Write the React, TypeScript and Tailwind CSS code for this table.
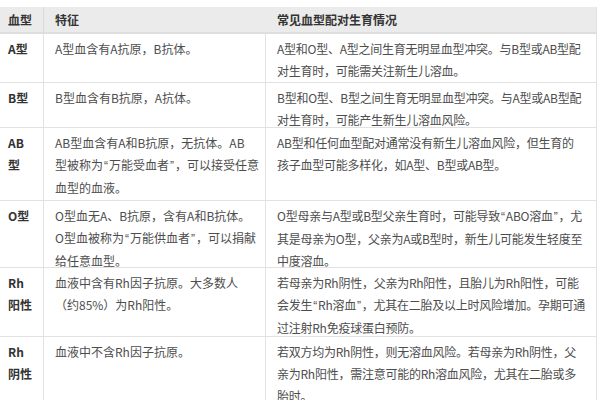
type Row = {
  type: string[];
  trait: string[];
  pairing: string[];
  height: string;
};

const rows: Row[] = [
  {
    type: ["A型"],
    trait: ["A型血含有A抗原，B抗体。"],
    pairing: [
      "A型和O型、A型之间生育无明显血型冲突。与B型或AB型配",
      "对生育时，可能需关注新生儿溶血。",
    ],
    height: "h-[49px]",
  },
  {
    type: ["B型"],
    trait: ["B型血含有B抗原，A抗体。"],
    pairing: [
      "B型和O型、B型之间生育无明显血型冲突。与A型或AB型配",
      "对生育时，可能产生新生儿溶血风险。",
    ],
    height: "h-[45px]",
  },
  {
    type: ["AB", "型"],
    trait: [
      "AB型血含有A和B抗原，无抗体。AB",
      "型被称为“万能受血者”，可以接受任意",
      "血型的血液。",
    ],
    pairing: [
      "AB型和任何血型配对通常没有新生儿溶血风险，但生育的",
      "孩子血型可能多样化，如A型、B型或AB型。",
    ],
    height: "h-[73px]",
  },
  {
    type: ["O型"],
    trait: [
      "O型血无A、B抗原，含有A和B抗体。",
      "O型血被称为“万能供血者”，可以捐献",
      "给任意血型。",
    ],
    pairing: [
      "O型母亲与A型或B型父亲生育时，可能导致“ABO溶血”，尤",
      "其是母亲为O型，父亲为A或B型时，新生儿可能发生轻度至",
      "中度溶血。",
    ],
    height: "h-[67px]",
  },
  {
    type: ["Rh", "阳性"],
    trait: ["血液中含有Rh因子抗原。大多数人", "（约85%）为Rh阳性。"],
    pairing: [
      "若母亲为Rh阴性，父亲为Rh阳性，且胎儿为Rh阳性，可能",
      "会发生“Rh溶血”，尤其在二胎及以上时风险增加。孕期可通",
      "过注射Rh免疫球蛋白预防。",
    ],
    height: "h-[69px]",
  },
  {
    type: ["Rh", "阴性"],
    trait: ["血液中不含Rh因子抗原。"],
    pairing: [
      "若双方均为Rh阴性，则无溶血风险。若母亲为Rh阴性，父",
      "亲为Rh阳性，需注意可能的Rh溶血风险，尤其在二胎或多",
      "胎时。",
    ],
    height: "h-[72px]",
  },
];

// curly quotes are full width in the CJK font; set them in a latin face so lines keep their width
function Line({ text }: { text: string }) {
  const parts = text.split(/([“”])/);
  return (
    <div className="whitespace-nowrap">
      {parts.map((p, i) =>
        p === "“" || p === "”" ? (
          <span key={i} className="font-['Liberation_Sans'] px-[1px]">
            {p}
          </span>
        ) : (
          <span key={i}>{p}</span>
        )
      )}
    </div>
  );
}

function Lines({ lines }: { lines: string[] }) {
  return (
    <>
      {lines.map((l, i) => (
        <Line key={i} text={l} />
      ))}
    </>
  );
}

export default function App() {
  return (
    <div
      className="w-[600px] h-[400px] overflow-hidden bg-white pt-[7px] text-[12px] leading-[22px]"
      style={{ fontFamily: '"Noto Sans CJK SC", "Noto Sans", sans-serif' }}
    >
      <div className="grid grid-cols-[44px_222px_331px] w-[597px]">
        {/* header */}
        <div className="h-[27px] bg-[#ebebeb] border-r border-[#d9d9d9] border-b-2 border-b-[#dedede] pl-[8px] flex items-center font-bold text-[#333]">
          血型
        </div>
        <div className="h-[27px] bg-[#ebebeb] border-b-2 border-b-[#dedede] pl-[11px] flex items-center font-bold text-[#333]">
          特征
        </div>
        <div className="h-[27px] bg-[#ebebeb] border-r border-[#e2e2e2] border-b-2 border-b-[#dedede] pl-[11px] flex items-center font-bold text-[#333]">
          常见血型配对生育情况
        </div>

        {rows.map((r, i) => (
          <div key={i} className="contents">
            <div
              className={`${r.height} border-r border-b border-[#e2e2e2] pl-[8px] pt-[4px] font-bold text-[#333]`}
            >
              <Lines lines={r.type} />
            </div>
            <div
              className={`${r.height} border-r border-b border-[#e2e2e2] pl-[11px] pt-[4px] text-[#4d4d4d]`}
            >
              <Lines lines={r.trait} />
            </div>
            <div
              className={`${r.height} border-r border-b border-[#e2e2e2] pl-[11px] pt-[4px] text-[#4d4d4d] tracking-[-0.25px] overflow-hidden`}
            >
              <Lines lines={r.pairing} />
            </div>
          </div>
        ))}
      </div>
    </div>
  );
}
